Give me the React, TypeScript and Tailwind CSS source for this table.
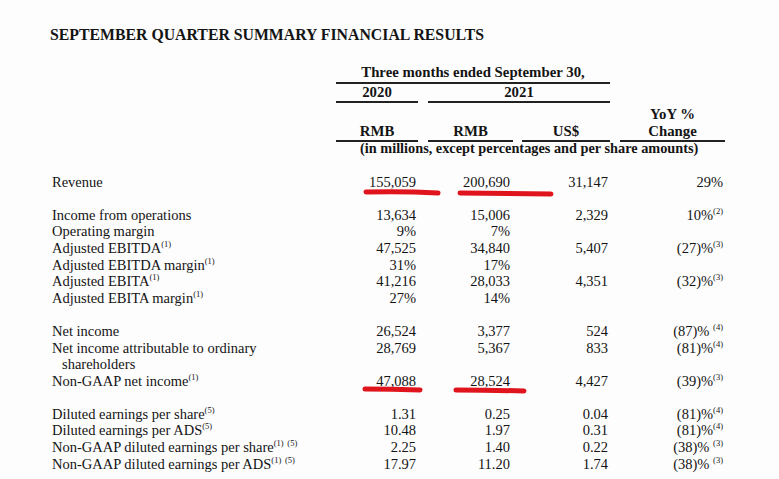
import React from "react";

type Row = {
  label: React.ReactNode;
  cont?: string;
  a: string;
  b: string;
  c?: string;
  d?: React.ReactNode;
  mark?: boolean;
};

const S = ({ n }: { n: string }) => (
  <sup className="relative -top-[6px] text-[8.5px] leading-none">{n}</sup>
);

const groups: Row[][] = [
  [{ label: "Revenue", a: "155,059", b: "200,690", c: "31,147", d: "29%", mark: true }],
  [
    { label: "Income from operations", a: "13,634", b: "15,006", c: "2,329", d: <>10%<S n="(2)" /></> },
    { label: "Operating margin", a: "9%", b: "7%" },
    { label: <>Adjusted EBITDA<S n="(1)" /></>, a: "47,525", b: "34,840", c: "5,407", d: <>(27)%<S n="(3)" /></> },
    { label: <>Adjusted EBITDA margin<S n="(1)" /></>, a: "31%", b: "17%" },
    { label: <>Adjusted EBITA<S n="(1)" /></>, a: "41,216", b: "28,033", c: "4,351", d: <>(32)%<S n="(3)" /></> },
    { label: <>Adjusted EBITA margin<S n="(1)" /></>, a: "27%", b: "14%" },
  ],
  [
    { label: "Net income", a: "26,524", b: "3,377", c: "524", d: <>(87)% <S n="(4)" /></> },
    { label: "Net income attributable to ordinary", cont: "shareholders", a: "28,769", b: "5,367", c: "833", d: <>(81)%<S n="(4)" /></> },
    { label: <>Non-GAAP net income<S n="(1)" /></>, a: "47,088", b: "28,524", c: "4,427", d: <>(39)%<S n="(3)" /></>, mark: true },
  ],
  [
    { label: <>Diluted earnings per share<S n="(5)" /></>, a: "1.31", b: "0.25", c: "0.04", d: <>(81)%<S n="(4)" /></> },
    { label: <>Diluted earnings per ADS<S n="(5)" /></>, a: "10.48", b: "1.97", c: "0.31", d: <>(81)%<S n="(4)" /></> },
    { label: <>Non-GAAP diluted earnings per share<S n="(1)" /> <S n="(5)" /></>, a: "2.25", b: "1.40", c: "0.22", d: <>(38)% <S n="(3)" /></> },
    { label: <>Non-GAAP diluted earnings per ADS<S n="(1)" /> <S n="(5)" /></>, a: "17.97", b: "11.20", c: "1.74", d: <>(38)% <S n="(3)" /></> },
  ],
];

// red pen stroke under a highlighted figure
const Stroke = ({ left, top, w, sag }: { left: number; top: number; w: number; sag: number }) => (
  <svg
    className="pointer-events-none absolute"
    style={{ left, top }}
    width={w}
    height="9"
    viewBox={`0 0 ${w} 9`}
  >
    <path
      d={`M3 4 Q ${w / 2} ${4 + sag} ${w - 3} 5`}
      stroke="#e0141c"
      strokeWidth="5"
      strokeLinecap="round"
      fill="none"
    />
  </svg>
);

const DataRow = ({ r, first }: { r: Row; first: boolean }) => (
  <div className="flex">
    <div className="w-[286px] pl-[2px]">
      <div>{r.label}</div>
      {r.cont && <div className="pl-[10px]">{r.cont}</div>}
    </div>
    <div className="relative w-[82px] pr-[2px] text-right">
      {r.a}
      {r.mark &&
        (first ? (
          <Stroke left={27} top={14} w={78} sag={-1} />
        ) : (
          <Stroke left={26} top={12} w={61} sag={0} />
        ))}
    </div>
    <div className="relative ml-[10px] w-[85px] pr-[3px] text-right">
      {r.b}
      {r.mark &&
        (first ? (
          <Stroke left={29} top={15} w={97} sag={0.5} />
        ) : (
          <Stroke left={25} top={13.5} w={74} sag={0} />
        ))}
    </div>
    <div className="ml-[9px] w-[88px] pr-[2px] text-right">{r.c}</div>
    <div className="ml-[10px] w-[105px] pr-[2px] text-right">{r.d}</div>
  </div>
);

export default function App() {
  return (
    <div
      className="h-[479px] w-[779px] overflow-hidden bg-[#fdfdfd] pl-[50px] pt-[26px] text-[14.5px] leading-[16.6px] text-[#141414]"
      style={{ fontFamily: '"Liberation Serif", "Times New Roman", serif' }}
    >
      <h1 className="text-[15.8px] font-bold leading-[18px]">
        SEPTEMBER QUARTER SUMMARY FINANCIAL RESULTS
      </h1>

      {/* column headings */}
      <div className="mt-[20px] text-[14.8px] font-bold">
        <div className="flex">
          <div className="w-[286px]" />
          <div className="w-[274px] border-b-2 border-[#222] pb-[1px] text-center">
            Three months ended September 30,
          </div>
        </div>
        <div className="flex">
          <div className="w-[286px]" />
          <div className="w-[82px] border-b-2 border-[#222] pb-[1px] text-center">2020</div>
          <div className="ml-[10px] w-[182px] border-b-2 border-[#222] pb-[1px] text-center">2021</div>
        </div>
        <div className="mt-[3px] flex items-end">
          <div className="w-[286px]" />
          <div className="w-[82px] border-b-2 border-[#222] pb-[1px] text-center">RMB</div>
          <div className="ml-[10px] w-[85px] border-b-2 border-[#222] pb-[1px] text-center">RMB</div>
          <div className="ml-[9px] w-[88px] border-b-2 border-[#222] pb-[1px] text-center">US$</div>
          <div className="ml-[10px] w-[105px] border-b-2 border-[#222] pb-[1px] text-center">
            <div>YoY %</div>
            <div>Change</div>
          </div>
        </div>
        <div className="-mt-[2px] flex text-[14.3px]">
          <div className="w-[310px]" />
          <div>(in millions, except percentages and per share amounts)</div>
        </div>
      </div>

      <div className="mt-[16.6px] flex flex-col gap-[16.6px]">
        {groups.map((g, gi) => (
          <div key={gi}>
            {g.map((r, ri) => (
              <DataRow key={ri} r={r} first={gi === 0} />
            ))}
          </div>
        ))}
      </div>
    </div>
  );
}
